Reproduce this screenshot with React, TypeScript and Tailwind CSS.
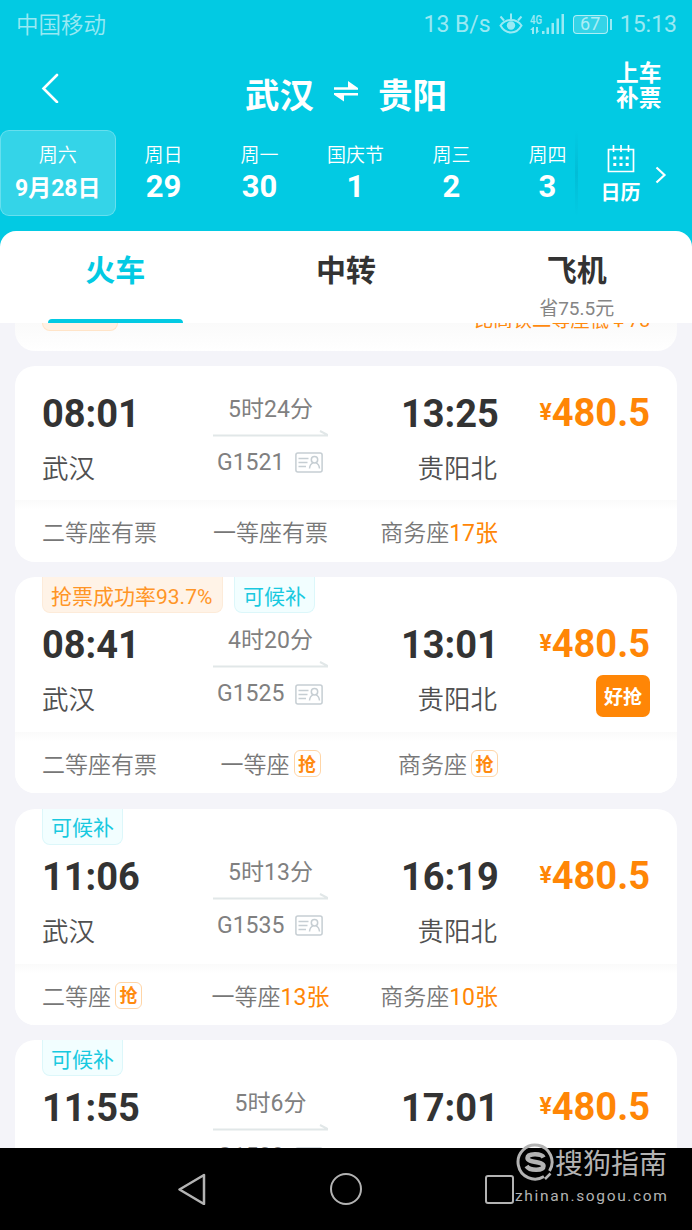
import clsx from "clsx";

type Seat = {
  name: string;
  status?: string;
  count?: string;
  grab?: boolean;
};

type Train = {
  number: string;
  depart: string;
  arrive: string;
  duration: string;
  tags: { label: string; tone: "orange" | "cyan" }[];
  hot?: boolean;
  seats: Seat[];
};

const DAYS = [
  { label: "周日", day: "29" },
  { label: "周一", day: "30" },
  { label: "国庆节", day: "1" },
  { label: "周三", day: "2" },
  { label: "周四", day: "3" },
];

const TRAINS: Train[] = [
  {
    number: "G1521",
    depart: "08:01",
    arrive: "13:25",
    duration: "5时24分",
    tags: [],
    seats: [
      { name: "二等座", status: "有票" },
      { name: "一等座", status: "有票" },
      { name: "商务座", count: "17张" },
    ],
  },
  {
    number: "G1525",
    depart: "08:41",
    arrive: "13:01",
    duration: "4时20分",
    tags: [
      { label: "抢票成功率93.7%", tone: "orange" },
      { label: "可候补", tone: "cyan" },
    ],
    hot: true,
    seats: [
      { name: "二等座", status: "有票" },
      { name: "一等座", grab: true },
      { name: "商务座", grab: true },
    ],
  },
  {
    number: "G1535",
    depart: "11:06",
    arrive: "16:19",
    duration: "5时13分",
    tags: [{ label: "可候补", tone: "cyan" }],
    seats: [
      { name: "二等座", grab: true },
      { name: "一等座", count: "13张" },
      { name: "商务座", count: "10张" },
    ],
  },
  {
    number: "G1539",
    depart: "11:55",
    arrive: "17:01",
    duration: "5时6分",
    tags: [{ label: "可候补", tone: "cyan" }],
    seats: [],
  },
];

function StatusBar() {
  return (
    <div className="flex h-12 items-center justify-between pr-[15px] pl-4 text-[23px] leading-none text-white/60">
      <span className="pt-0.5 text-[22.5px] font-[350]">中国移动</span>
      <div className="flex items-center">
        <span>13 B/s</span>
        <svg className="ml-2 h-[22px] w-6" viewBox="0 0 24 22" fill="none" stroke="currentColor" strokeWidth="2">
          <path d="M1.500 12.500C4 9 8 7 12 7s8 2 10.500 5.500C20 17 16 19.500 12 19.500s-8-2.500-10.500-7Z" />
          <circle cx="12" cy="12.500" r="4.200" fill="currentColor" stroke="none" />
          <path d="M12 6V.5M5 7.500 1.500 3.500M19 7.500l3.500-4" />
        </svg>
        <svg className="ml-[7px] h-[22px] w-[35px]" viewBox="0 0 35 22" fill="currentColor">
          <text x="0" y="10.500" fontSize="13" fontWeight="600" textLength="12" lengthAdjust="spacingAndGlyphs">
            4G
          </text>
          <path d="M3 14 0 17h2v4h2v-7ZM6 14v7l3.500-3.200H8V14Z" />
          <path d="M12 18h2.500v3H12zM16.500 14.500H19V21h-2.500zM21.500 10H24v11h-2.500zM26.500 5.500H29V21h-2.500zM31.500 1H34v20h-2.500z" />
        </svg>
        <div className="ml-2 flex items-center">
          <div className="flex h-[19px] w-[35px] items-center justify-center rounded-[4px] border border-white/60 bg-white/20 text-[18px]">67</div>
          <div className="ml-0.5 h-[11px] w-0.5 bg-white/60" />
        </div>
        <span className="ml-[8px]">15:13</span>
      </div>
    </div>
  );
}

function Header() {
  return (
    <header>
      <StatusBar />
      <div className="flex h-[82px] justify-between pr-[30px] pl-[41px]">
        <svg className="mt-[25px] h-[30px] w-[18px]" viewBox="0 0 18 30" fill="none" stroke="#fff" strokeWidth="2.600" strokeLinecap="round">
          <path d="M16 2 2.500 15.500 16 29" />
        </svg>
        <h1 className="ml-[17px] flex h-[97px] items-center text-[34.5px] leading-none font-bold">
          武汉
          <svg className="mx-5 mb-2.5 h-[21px] w-6" viewBox="0 0 24 21" fill="#fff">
            <path d="M0 6.200h14V0l10 7v1.700H0zM24 12v2.500H10v6L0 13.800V12z" />
          </svg>
          贵阳
        </h1>
        <div className="w-[46px] pt-[13px] text-[22.7px] leading-[25px] font-bold">
          上车
          <br />
          补票
        </div>
      </div>
      <div className="flex h-[101px]">
        <div className="flex h-[86px] w-[115.5px] flex-col items-center rounded-[9px] border border-white/25 bg-white/20 pt-[13px]">
          <span className="text-[19px] leading-6 font-[350]">周六</span>
          <span className="mt-[7px] text-[23px] leading-7 font-bold">9月28日</span>
        </div>
        {DAYS.map((item) => (
          <div key={item.label} className="flex w-24 flex-col items-center pt-[14px]">
            <span className="text-[19px] leading-6 font-[350]">{item.label}</span>
            <span className="mt-[3px] text-[31px] leading-8 font-bold">{item.day}</span>
          </div>
        ))}
        <div className="-ml-[21px] h-[86px] w-[3px] bg-gradient-to-b from-transparent via-[#00a9c4]/40 to-transparent" />
        <div className="ml-[22px] flex w-[42px] flex-col items-center pt-[15px]">
          <svg className="h-7 w-7" viewBox="0 0 28 28" fill="none" stroke="#fff" strokeWidth="1.700">
            <path d="M1.500 4.500h25v22h-25zM6.500 0v7M14 0v7M21.500 0v7" />
            <path strokeDasharray="3 3.200" strokeWidth="3" d="M6.300 13h16M6.300 19.500h16" />
          </svg>
          <span className="mt-[6px] text-[20px] leading-7 font-bold">日历</span>
        </div>
        <svg className="mt-9 ml-[13px] h-[18px] w-3" viewBox="0 0 12 18" fill="none" stroke="#fff" strokeWidth="2.200">
          <path d="m1.500 1.500 8 7.500-8 7.500" />
        </svg>
      </div>
    </header>
  );
}

function Tabs() {
  return (
    <div className="grid h-[92px] grid-cols-3 rounded-t-[16px] bg-white text-center text-[30px] leading-10 font-bold text-[#333]">
      <div className="flex flex-col items-center justify-between pt-5 text-[#02cae3]">
        火车
        <div className="h-1 w-[135px] rounded-t bg-[#02cae3]" />
      </div>
      <div className="pt-5">中转</div>
      <div className="flex flex-col pt-5">
        飞机
        <span className="mt-1 text-[19px] leading-7 font-normal text-[#858585]">省75.5元</span>
      </div>
    </div>
  );
}

function SeatStatus({ seat }: { seat: Seat }) {
  return (
    <>
      {seat.name}
      {seat.status}
      {seat.count ? <span className="font-normal text-[#ff8606]">{seat.count}</span> : null}
      {seat.grab ? (
        <span className="mb-1 ml-1 flex h-[27px] w-[27px] shrink-0 items-center justify-center rounded-[6px] border border-[#ffd5a6] pt-0.5 text-[18px] font-bold text-[#ff8a0f]">
          抢
        </span>
      ) : null}
    </>
  );
}

function IdCardIcon() {
  return (
    <svg className="h-[21px] w-7" viewBox="0 0 28 21" fill="none" stroke="#c6ced3" strokeWidth="1.500">
      <rect x=".9" y=".9" width="26.200" height="19" rx="2" />
      <path d="M3.500 6.500h10M3.500 10.500h9M3.500 14.500h7.500" />
      <circle cx="19.500" cy="7.800" r="3.200" />
      <path d="M14.500 16.500c.3-3 1.600-4.800 3.500-5.600M24.500 16.500c-.3-3-1.600-4.800-3.500-5.600" />
    </svg>
  );
}

function TrainCard({ train }: { train: Train }) {
  const tagged = train.tags.length > 0;

  return (
    <article className={clsx("relative shrink-0 rounded-[20px] bg-white", tagged ? "h-[216px]" : "h-[196px]")}>
      {tagged ? (
        <div className="absolute top-0 left-[27px] flex gap-[11px]">
          {train.tags.map((tag) => (
            <span
              key={tag.label}
              className={clsx(
                "flex h-9 items-center rounded-b-[8px] border border-t-0 px-2 pt-[5px] text-[21px] leading-none whitespace-nowrap",
                tag.tone === "orange" ? "w-[181px] border-[#fdebd9] bg-[#fff3e7] text-[#ff9526]" : "border-[#dcf7fa] bg-[#f2feff] text-[#18c9df]",
              )}
            >
              {tag.label}
            </span>
          ))}
        </div>
      ) : null}
      <div className={clsx("grid grid-cols-[171px_115px_170px_1fr] px-[27px]", tagged ? "h-[155px] pt-12" : "h-[134px] pt-7")}>
        <div>
          <div className="text-[38px] leading-10 font-bold text-[#333]">{train.depart}</div>
          <div className="mt-[17px] text-[26.5px] leading-9 font-[350] text-[#505050]">武汉</div>
        </div>
        <div className="text-center text-[23px] leading-[30px] text-[#808080]">
          <div className="pt-px">{train.duration}</div>
          <svg className="mt-[5px] h-[7px] w-[115px]" viewBox="0 0 115 7" fill="none" stroke="#e1e7e8" strokeWidth="2">
            <path d="M0 5.500h115M107 1l8 4" />
          </svg>
          <div className="mt-[11px] flex items-center gap-[11px] pl-1">
            {train.number}
            <IdCardIcon />
          </div>
        </div>
        <div className="flex flex-col items-end">
          <div className="w-[97px] text-[38px] leading-10 font-bold text-[#333]">{train.arrive}</div>
          <div className="mt-[17px] mr-px text-[26.5px] leading-9 font-[350] text-[#505050]">贵阳北</div>
        </div>
        <div className="flex flex-col items-end text-[#ff8606]">
          <div className="flex leading-[38px] font-bold">
            <span className="text-[23px]">¥</span>
            <span className="text-[38px]">480.5</span>
          </div>
          {train.hot ? (
            <div className="mt-3 flex h-[42px] w-[54px] items-center justify-center rounded-[7px] bg-[#ff8606] pt-0.5 text-[19px] leading-none font-bold text-white">
              好抢
            </div>
          ) : null}
        </div>
      </div>
      <div className="grid h-[61px] grid-cols-[171px_115px_170px] rounded-b-[20px] bg-gradient-to-b from-[#fafafa] to-white to-15% px-[27px] pt-1.5 text-[23px] leading-none font-[350] whitespace-nowrap text-[#777]">
        {train.seats.map((seat, index) => (
          <div key={seat.name} className={clsx("flex items-center", index === 1 && "justify-center", index === 2 && "justify-end")}>
            <SeatStatus seat={seat} />
          </div>
        ))}
      </div>
    </article>
  );
}

function Watermark() {
  return (
    <div className="absolute right-[23px] bottom-6 flex w-[154px] flex-col text-[#b3b3b3]">
      <div className="flex items-center">
        <svg className="mb-[3px] h-10 w-10 shrink-0" viewBox="0 0 40 40" fill="none" stroke="currentColor" strokeWidth="3">
          <path d="M29 33.500A17 17 0 1 1 34.500 28" />
          <path d="m30 36 5.500-5.500" strokeWidth="2.500" />
          <path d="M28.500 14.500c-2-4.500-16-4.500-16 .500 0 5 16 3 16 8s-14 5-17 0" strokeWidth="4.500" />
        </svg>
        <span className="text-[28px] leading-none whitespace-nowrap">搜狗指南</span>
      </div>
      <span className="text-[15.500px] leading-5 tracking-[1.650px] whitespace-nowrap">zhinan.sogou.com</span>
    </div>
  );
}

function NavBar() {
  return (
    <nav className="relative flex h-[82px] items-center justify-center gap-[123px] bg-black pr-[4px]">
      <svg className="h-8 w-8" viewBox="0 0 32 32" fill="none" stroke="#b3b3b3" strokeWidth="2.500" strokeLinejoin="round">
        <path d="M29 2v29L4.500 16.500z" />
      </svg>
      <div className="h-8 w-8 rounded-full border-[2.500px] border-[#b3b3b3]" />
      <div className="h-[29px] w-[29px] rounded-[3px] border-[2.500px] border-[#b3b3b3]" />
      <Watermark />
    </nav>
  );
}

export default function App() {
  return (
    <div className="flex h-[1230px] w-[692px] flex-col overflow-hidden bg-[#02cae3] font-['Roboto','Noto_Sans_CJK_SC',sans-serif] text-white">
      <Header />
      <Tabs />
      <main className="flex h-[825px] flex-col gap-[15.4px] overflow-hidden bg-[#f4f4f9] px-[15px]">
        <div className="flex h-[27.6px] shrink-0 items-start justify-between rounded-b-[20px] bg-gradient-to-b from-[#fafafa] to-white px-[27px]">
          <div className="h-2 w-[76px] rounded-b-[12px] border border-t-0 border-[#ffe4c8] bg-[#fff1e4]" />
          <div className="flex h-[9px] items-end overflow-hidden text-[19.3px] leading-[22px] text-[#ff8a0f]">比高铁二等座低￥78</div>
        </div>
        {TRAINS.map((train) => (
          <TrainCard key={train.number} train={train} />
        ))}
      </main>
      <NavBar />
    </div>
  );
}
